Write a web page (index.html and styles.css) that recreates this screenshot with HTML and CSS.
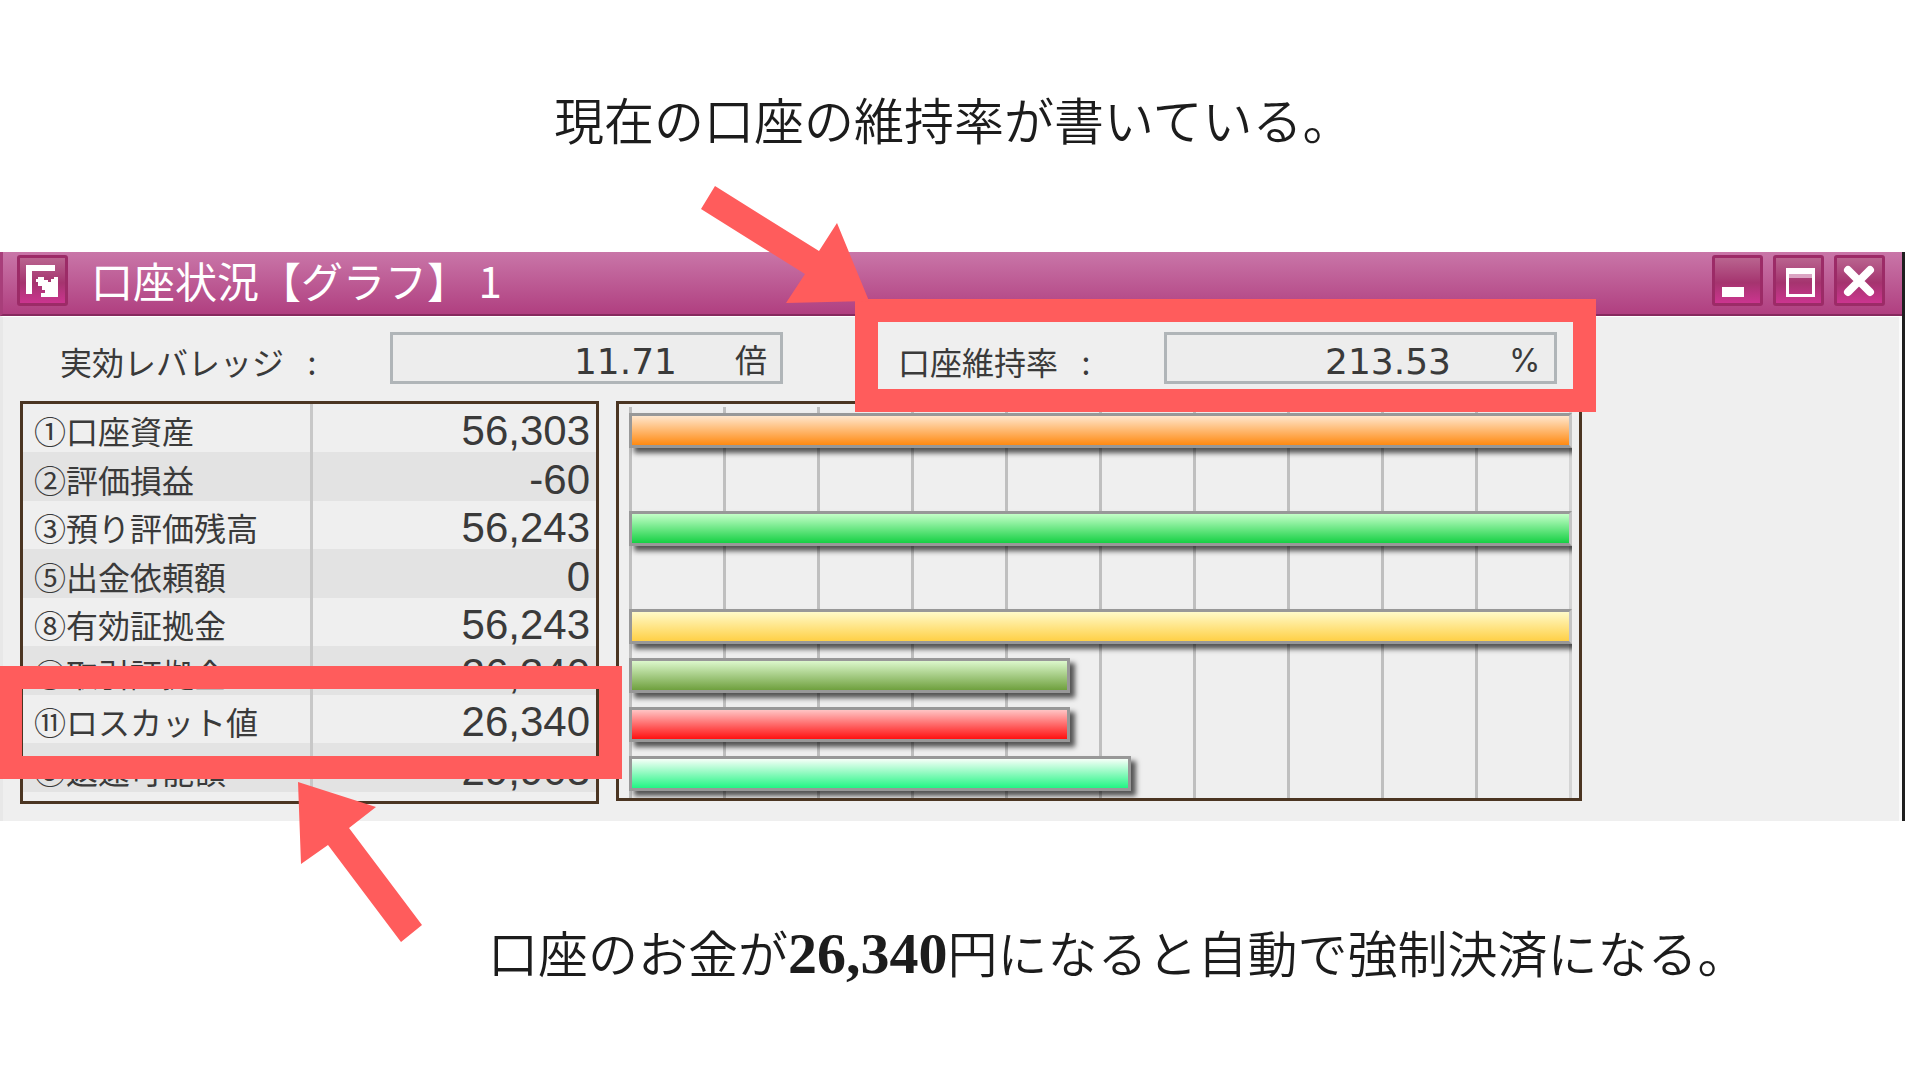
FILE: index.html
```html
<!DOCTYPE html>
<html lang="ja">
<head>
    <meta charset="UTF-8">
    <meta name="viewport" content="width=device-width, initial-scale=1.0">
    <title>口座状況</title>
    <link rel="stylesheet" href="styles.css">
</head>
<body>
    <p class="caption caption-top">現在の口座の維持率が書いている。</p>

    <!-- Account window -->
    <main class="window">
        <header class="titlebar">
            <button class="win-btn" type="button" aria-label="メニュー">
                <svg viewBox="0 0 51 51">
                    <path d="M9 10h29v6H15v23H9z" fill="#fff"/>
                    <path d="M21 22h6v3h4v2h3v-3h3v-2h4v20H24v-4h4v-3h-3v-4h-4v-4h-2v-3h2z" fill="#fff"/>
                </svg>
            </button>
            <h1>口座状況【グラフ】 1</h1>
            <div class="win-controls">
                <button class="win-btn" type="button" aria-label="最小化">
                    <svg viewBox="0 0 51 51"><path d="M10 32h22v10H10z" fill="#fff"/></svg>
                </button>
                <button class="win-btn" type="button" aria-label="最大化">
                    <svg viewBox="0 0 51 51">
                        <path d="M13 13h29v29H13zM16 22v17h23V22z" fill="#fff" fill-rule="evenodd"/>
                        <path d="M16 19h23v4H16z" fill="#dba5c3"/>
                    </svg>
                </button>
                <button class="win-btn" type="button" aria-label="閉じる">
                    <svg viewBox="0 0 51 51"><path d="M14 15l22 22M36 15L14 37" stroke="#fff" stroke-width="8" stroke-linecap="round"/></svg>
                </button>
            </div>
        </header>

        <div class="content">
            <div class="metrics">
                <div class="metric">
                    <label for="leverage">実効レバレッジ</label><span class="colon">:</span>
                    <div class="field">
                        <input id="leverage" type="text" value="11.71" readonly>
                        <span class="unit">倍</span>
                    </div>
                </div>
                <div class="metric">
                    <label for="ratio">口座維持率</label><span class="colon">:</span>
                    <div class="field">
                        <input id="ratio" type="text" value="213.53" readonly>
                        <span class="unit">%</span>
                    </div>
                    <div class="highlight highlight-ratio"></div>
                    <svg class="arrow arrow-ratio" viewBox="0 0 170 120">
                        <path d="M14 0L118 65L136 37L168 115L85 117L104 88L0 23z"/>
                    </svg>
                </div>
            </div>

            <div class="panels">
                <div class="panel table-panel">
                    <table>
                        <tr><th scope="row">①口座資産</th><td>56,303</td></tr>
                        <tr><th scope="row">②評価損益</th><td>-60</td></tr>
                        <tr><th scope="row">③預り評価残高</th><td>56,243</td></tr>
                        <tr><th scope="row">⑤出金依頼額</th><td>0</td></tr>
                        <tr><th scope="row">⑧有効証拠金</th><td>56,243</td></tr>
                        <tr><th scope="row">⑨取引証拠金</th><td>26,340</td></tr>
                        <tr><th scope="row">⑪ロスカット値</th><td>26,340</td></tr>
                        <tr><th scope="row">⑨返還可能額</th><td>29,903</td></tr>
                    </table>
                    <div class="highlight highlight-losscut"></div>
                    <svg class="arrow arrow-losscut" viewBox="0 0 124 160">
                        <path d="M0 0L78 25L51 46L124 143L103 160L30 63L3 82z"/>
                    </svg>
                </div>

                <div class="panel chart-panel">
                    <div class="plot">
                        <div class="grid-lines">
                            <i></i><i></i><i></i><i></i><i></i><i></i><i></i><i></i><i></i><i></i><i></i>
                        </div>
                        <div class="bars">
                            <div class="bar orange full" style="width: 100%"></div>
                            <div class="bar empty"></div>
                            <div class="bar green full" style="width: 100%"></div>
                            <div class="bar empty"></div>
                            <div class="bar yellow full" style="width: 100%"></div>
                            <div class="bar olive" style="width: 46.8%"></div>
                            <div class="bar red" style="width: 46.8%"></div>
                            <div class="bar mint" style="width: 53.2%"></div>
                        </div>
                    </div>
                </div>
            </div>
        </div>
    </main>

    <p class="caption caption-bottom">口座のお金が<span class="amount">26,340</span>円になると自動で強制決済になる。</p>
</body>
</html>
```
FILE: styles.css
```css
* {
    margin: 0;
    padding: 0;
    box-sizing: border-box;
}

body {
    font-family: 'Noto Sans CJK JP', sans-serif;
    background: #fff;
    color: #3a3a3a;
    overflow-x: hidden;
}

/* Captions */
.caption {
    color: #1c1c1c;
    font-size: 50px;
    font-weight: 350;
    line-height: 60px;
    white-space: nowrap;
}

.caption-top {
    padding: 88px 0 104px 554px;
}

.caption-bottom {
    padding: 100px 0 60px 488px;
}

.amount {
    font-family: 'Liberation Serif', serif;
    font-size: 58px;
    font-weight: bold;
    line-height: 50px;
}

/* Window */
.window {
    margin-right: 15px;
    border-right: 3px solid #1e1e1e;
}

.titlebar {
    display: flex;
    align-items: center;
    height: 64px;
    padding: 0 17px 6px 14px;
    background: linear-gradient(#c976a8, #b03f80);
    border-bottom: 2px solid #862a5e;
    border-left: 3px solid #a83e7a;
}

.titlebar h1 {
    flex: 1;
    margin-left: 23px;
    color: #fff;
    font-size: 42px;
    font-weight: 400;
    line-height: 50px;
    white-space: pre;
}

.win-controls {
    display: flex;
    gap: 10px;
}

.win-btn {
    width: 51px;
    height: 51px;
    border: 3px solid #9c2b67;
    border-radius: 3px;
    background: linear-gradient(#b9648f, #a5346f 55%, #cb358f);
}

.win-btn svg {
    display: block;
    width: 51px;
    height: 51px;
    margin: -3px;
    fill: none;
}

.content {
    padding: 15px 0 17px 17px;
    background: #efefef;
    border-top: 1px solid #fff;
    border-left: 3px solid #e8e8e8;
    border-right: 3px solid #fafafa;
}

/* Ratio fields */
.metrics {
    display: flex;
    gap: 115px;
    padding-left: 40px;
}

.metric {
    position: relative;
    display: flex;
    align-items: center;
    font-size: 32px;
    line-height: 46px;
    white-space: nowrap;
}

.metric label,
.colon {
    padding-top: 6px;
}

.colon {
    width: 32px;
    margin: 0 62px 0 12px;
    text-align: center;
}

.field {
    display: flex;
    align-items: center;
    width: 393px;
    height: 52px;
    padding: 6px 13px 0 0;
    border: 3px solid #b0b5b8;
    background: #ededed;
}

.field input {
    flex: 1;
    min-width: 0;
    margin-right: 58px;
    border: none;
    background: none;
    color: #3a3a3a;
    font-family: 'DejaVu Sans', sans-serif;
    font-size: 36px;
    text-align: right;
}

.unit {
    width: 32px;
    font-family: 'Inter', 'Noto Sans CJK JP', sans-serif;
}

/* Panels */
.panels {
    display: grid;
    grid-template-columns: 579px minmax(0, 966px);
    gap: 17px;
    align-items: start;
    margin-top: 17px;
}

.panel {
    border: 3px solid #4b3522;
    background: #efefef;
}

.table-panel {
    position: relative;
    padding-bottom: 9px;
}

table {
    width: 100%;
    border-collapse: collapse;
}

tr {
    height: 48px;
}

tr:nth-child(even) {
    height: 49px;
    background: #e3e3e3;
}

th {
    width: 288px;
    padding: 4px 0 0 11px;
    border-right: 3px solid #c8c8c8;
    font-size: 32px;
    font-weight: normal;
    line-height: 44px;
    text-align: left;
    white-space: nowrap;
}

td {
    padding: 6px 6px 0 0;
    font-family: 'Liberation Sans', sans-serif;
    font-size: 42px;
    line-height: 42px;
    text-align: right;
}

/* Chart */
.chart-panel {
    padding: 3px 7px 0 10px;
}

.plot {
    display: grid;
    height: 391px;
    overflow: hidden;
}

.grid-lines,
.bars {
    grid-area: 1 / 1;
}

.grid-lines {
    display: flex;
    justify-content: space-between;
}

.grid-lines i {
    width: 3px;
    background: #bfbfbf;
}

.grid-lines i:last-child {
    background: #d4d4d4;
}

.bars {
    display: flex;
    flex-direction: column;
    gap: 14px;
    padding-top: 6px;
}

.bar {
    flex: none;
    height: 35px;
    border: 3px solid #989898;
    box-shadow: 5px 5px 5px rgba(0, 0, 0, 0.65);
}

.full {
    border-right-color: #c4c4c4;
}

.empty {
    border-color: transparent;
    box-shadow: none;
}

.orange {
    background: linear-gradient(#ffe6cc, #ff8a12);
}

.green {
    background: linear-gradient(#c4ffc8, #16d044);
}

.yellow {
    background: linear-gradient(#fffac8, #ffd046);
}

.olive {
    background: linear-gradient(#dcf8cc, #6fa03e);
}

.red {
    background: linear-gradient(#ffc4c4, #ff1010);
}

.mint {
    background: linear-gradient(#f6fff8, #22f584);
}

/* Annotations */
.highlight {
    position: absolute;
    z-index: 1;
    border: 23px solid #ff5c5c;
    pointer-events: none;
}

.highlight-ratio {
    top: -33px;
    right: -39px;
    bottom: -28px;
    left: -43px;
}

.highlight-losscut {
    right: -26px;
    bottom: 22px;
    left: -24px;
    height: 113px;
}

.arrow {
    position: absolute;
    z-index: 1;
    fill: #ff5c5c;
}

.arrow-ratio {
    top: -146px;
    left: -197px;
    width: 170px;
}

.arrow-losscut {
    bottom: -141px;
    left: 275px;
    width: 124px;
}
```
